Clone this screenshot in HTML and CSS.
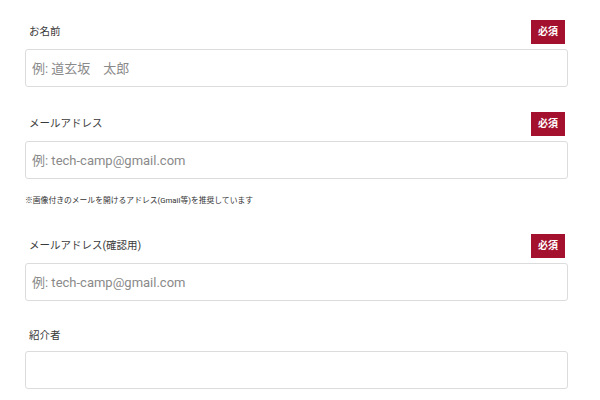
FILE: index.html
```html
<!DOCTYPE html>
<html lang="ja">
<head>
  <meta charset="UTF-8" />
  <meta name="viewport" content="width=device-width, initial-scale=1.0" />
  <title>登録フォーム</title>
  <link rel="stylesheet" href="styles.css">
</head>
<body>
  <form class="entry-form">
    <div class="field">
      <div class="field-head">
        <label for="name">お名前</label>
        <span class="required">必須</span>
      </div>
      <input type="text" id="name" name="name" placeholder="例: 道玄坂　太郎" />
    </div>

    <div class="field">
      <div class="field-head">
        <label for="email">メールアドレス</label>
        <span class="required">必須</span>
      </div>
      <input type="email" id="email" name="email" placeholder="例: tech-camp@gmail.com" />
      <p class="note">※画像付きのメールを開けるアドレス(Gmail等)を推奨しています</p>
    </div>

    <div class="field">
      <div class="field-head">
        <label for="emailConfirm">メールアドレス(確認用)</label>
        <span class="required">必須</span>
      </div>
      <input type="email" id="emailConfirm" name="emailConfirm" placeholder="例: tech-camp@gmail.com" />
    </div>

    <div class="field">
      <div class="field-head">
        <label for="referrer">紹介者</label>
      </div>
      <input type="text" id="referrer" name="referrer" />
    </div>
  </form>
</body>
</html>
```

FILE: styles.css
```css
body {
  font-family: Roboto, "Noto Sans CJK JP", sans-serif;
  background-color: #fff;
  color: #333;
  margin: 0;
  padding: 0;
}

.entry-form {
  width: 543px;
  margin: 20px 0 0 25px;
}

.field {
  margin-bottom: 25px;
}

.field-head {
  display: flex;
  justify-content: space-between;
  align-items: center;
  margin-bottom: 5px;
}

label {
  padding-left: 4px;
  font-size: 10.5px;
  line-height: 20px;
  color: #3a3a3a;
}

.required {
  width: 34px;
  height: 24px;
  margin-right: 3px;
  background-color: #a3112e;
  color: #fff;
  font-size: 10px;
  font-weight: bold;
  line-height: 24px;
  text-align: center;
}

input {
  display: block;
  width: 100%;
  height: 38px;
  padding: 0 6px;
  box-sizing: border-box;
  border: 1px solid #dcdcdc;
  border-radius: 3px;
  font-family: Roboto, "Noto Sans CJK JP", sans-serif;
  font-size: 13px;
  color: #333;
}

input::placeholder {
  color: #8a8a8a;
}

.note {
  margin: 16px 0 0;
  font-size: 7.8px;
  line-height: 12px;
  color: #333;
}

.field:has(.note) {
  margin-bottom: 27px;
}
```
